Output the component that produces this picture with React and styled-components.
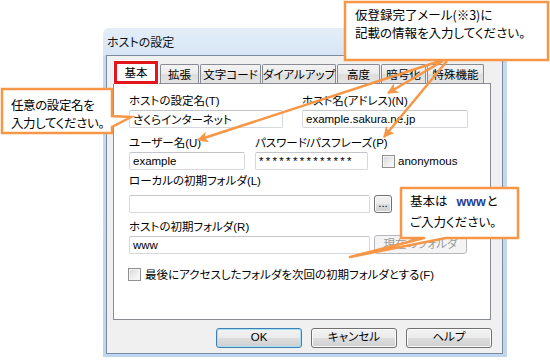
import React from "react";
import styled, { createGlobalStyle } from "styled-components";

const ORANGE = "#f79646";
const UI_FONT = `"Liberation Sans", "Noto Sans CJK JP", sans-serif`;
const CALLOUT_FONT = `"Noto Sans CJK JP", "Liberation Sans", sans-serif`;

const GlobalStyle = createGlobalStyle`
  html, body { margin: 0; padding: 0; background: #ffffff; }
  body {
    font-family: ${UI_FONT};
    font-feature-settings: "palt";
  }
  #root { width: 550px; height: 361px; }
`;

const Page = styled.div`
  position: relative;
  width: 550px;
  height: 361px;
  overflow: hidden;
  box-sizing: border-box;
  padding: 28px 0 0 103px;
`;

const Window = styled.div`
  width: 404px;
  height: 329px;
  box-sizing: border-box;
  display: flex;
  flex-direction: column;
  padding: 0 4px 3px 3px;
  border-radius: 6px 6px 0 0;
  background: linear-gradient(180deg, #e4eef8 0px, #d6e5f5 27px, #c4daf1 28px, #bed6ef 100%);
`;

const TitleBar = styled.div`
  height: 27px;
  display: flex;
  align-items: center;
  padding: 0 0 1px 1px;
  box-sizing: border-box;
  font-size: 12px;
  color: #111;
`;

const Client = styled.div`
  flex: 1;
  display: flex;
  flex-direction: column;
  border: 1px solid #7b8a9c;
  background: #f0f0f0;
  padding: 4px 10px 0 6px;
`;

const TabStrip = styled.div`
  display: flex;
  align-items: flex-end;
  height: 23px;
`;

const Tab = styled.div`
  position: relative;
  width: ${(p) => p.$w}px;
  height: ${(p) => (p.$selected ? 24 : 19)}px;
  margin-left: ${(p) => (p.$first ? 0 : 1)}px;
  margin-bottom: ${(p) => (p.$selected ? -1 : 0)}px;
  z-index: ${(p) => (p.$selected ? 1 : 0)};
  box-sizing: border-box;
  display: flex;
  align-items: center;
  justify-content: center;
  padding-bottom: ${(p) => (p.$selected ? 2 : 0)}px;
  font-size: 11.5px;
  color: #000;
  white-space: nowrap;
  border: 1px solid ${(p) => (p.$selected ? "transparent" : "#898c95")};
  border-bottom: none;
  border-radius: 2px 2px 0 0;
  background: ${(p) =>
    p.$selected
      ? "#ffffff"
      : "linear-gradient(180deg, #f3f3f3 0%, #ebebeb 50%, #dddddd 51%, #e4e4e4 100%)"};

  &::after {
    content: "";
    display: ${(p) => (p.$highlight ? "block" : "none")};
    position: absolute;
    left: 0;
    top: 0;
    width: 100%;
    height: 23px;
    box-sizing: border-box;
    border: 3px solid #e3161e;
  }
`;

const Panel = styled.div`
  width: 378px;
  height: 237px;
  box-sizing: border-box;
  border: 1px solid #898c95;
  background: #ffffff;
  padding: 9px 0 0 15px;
  display: flex;
  flex-direction: column;
`;

const Row = styled.div`
  display: flex;
  align-items: flex-end;
  margin-top: ${(p) => p.$mt || 0}px;
`;

const Field = styled.div`
  display: flex;
  flex-direction: column;
  width: ${(p) => p.$w}px;
  margin-left: ${(p) => p.$ml || 0}px;
`;

const Label = styled.label`
  height: 16px;
  line-height: 16px;
  font-size: 11.5px;
  color: #000;
  white-space: nowrap;
  margin-bottom: ${(p) => (p.$mb === undefined ? 1 : p.$mb)}px;
`;

const TextBox = styled.input`
  display: block;
  width: 100%;
  height: 18px;
  margin: 0;
  box-sizing: border-box;
  border: 1px solid #d5d9de;
  border-top-color: #c2c6cc;
  border-radius: 2px;
  padding: 0 3px;
  background: #ffffff;
  font-family: ${UI_FONT};
  font-feature-settings: "palt";
  font-size: 11.5px;
  letter-spacing: ${(p) => (p.$spaced ? "2.3px" : "0")};
  color: #000;
  outline: none;
`;

const PushButton = styled.button`
  width: ${(p) => p.$w}px;
  height: ${(p) => p.$h || 20}px;
  margin: 0 0 0 ${(p) => p.$ml || 0}px;
  padding: 0;
  box-sizing: border-box;
  font-family: ${UI_FONT};
  font-feature-settings: "palt";
  font-size: 11.5px;
  line-height: 1;
  color: ${(p) => (p.disabled ? "#9a9a9a" : "#000")};
  border-radius: 3px;
  border: 1px solid ${(p) => (p.$default ? "#3c7fb1" : p.disabled ? "#b5b9bd" : "#707070")};
  background: ${(p) =>
    p.disabled
      ? "#f4f4f4"
      : "linear-gradient(180deg, #f2f2f2 0%, #ebebeb 48%, #dddddd 52%, #cfcfcf 100%)"};
  box-shadow: inset 0 0 0 1px ${(p) => (p.$default ? "#a6e0f7" : p.disabled ? "#f4f4f4" : "#fbfbfb")};
`;

const CheckRow = styled.div`
  display: flex;
  align-items: center;
  gap: ${(p) => p.$gap || 3}px;
  height: ${(p) => p.$h || 16}px;
  margin-left: ${(p) => p.$ml || 0}px;
  margin-top: ${(p) => p.$mt || 0}px;
  font-size: 11.5px;
  color: #000;
  white-space: nowrap;
`;

const CheckBox = styled.span`
  display: block;
  flex: none;
  width: 13px;
  height: 13px;
  box-sizing: border-box;
  border: 1px solid #8e8f8f;
  background: linear-gradient(135deg, #d6d6d6 0%, #f0f0f0 60%, #fbfbfb 100%);
  box-shadow: inset 0 0 0 1px #f4f4f4;
`;

const ButtonRow = styled.div`
  display: flex;
  justify-content: flex-end;
  gap: 9px;
  margin-top: 8px;
`;

const Overlay = styled.svg`
  position: absolute;
  left: 0;
  top: 0;
  pointer-events: none;
`;

const CalloutText = styled.div`
  position: absolute;
  left: ${(p) => p.$x}px;
  top: ${(p) => p.$y}px;
  font-family: ${CALLOUT_FONT};
  font-feature-settings: "palt";
  font-size: 12.5px;
  letter-spacing: ${(p) => p.$ls || 0}px;
  line-height: ${(p) => p.$lh || 18}px;
  color: #000;
  white-space: nowrap;
`;

const Accent = styled.b`
  color: #1f3c99;
  font-family: "Liberation Sans", sans-serif;
  font-weight: bold;
  margin: 0 1px 0 9px;
`;

const tabs = [
  { label: "基本", w: 46, sel: true },
  { label: "拡張", w: 39 },
  { label: "文字コード", w: 61 },
  { label: "ダイアルアップ", w: 74 },
  { label: "高度", w: 43 },
  { label: "暗号化", w: 45 },
  { label: "特殊機能", w: 57 },
];

export default function App() {
  return (
    <>
      <GlobalStyle />
      <Page>
        <Window>
          <TitleBar>ホストの設定</TitleBar>
          <Client>
            <TabStrip>
              {tabs.map((t, i) => (
                <Tab key={t.label} $w={t.w} $first={i === 0} $selected={t.sel} $highlight={t.sel}>
                  {t.label}
                </Tab>
              ))}
            </TabStrip>
            <Panel>
              <Row>
                <Field $w={154}>
                  <Label>ホストの設定名(T)</Label>
                  <TextBox readOnly value="さくらインターネット" />
                </Field>
                <Field $w={166} $ml={19}>
                  <Label>ホスト名(アドレス)(N)</Label>
                  <TextBox readOnly value="example.sakura.ne.jp" />
                </Field>
              </Row>
              <Row $mt={7}>
                <Field $w={116}>
                  <Label>ユーザー名(U)</Label>
                  <TextBox readOnly value="example" />
                </Field>
                <Field $w={113} $ml={10}>
                  <Label>パスワード/パスフレーズ(P)</Label>
                  <TextBox readOnly $spaced value="**************" />
                </Field>
                <CheckRow $h={18} $ml={14} $gap={3}>
                  <CheckBox />
                  anonymous
                </CheckRow>
              </Row>
              <Row $mt={3}>
                <Field $w={241}>
                  <Label $mb={6}>ローカルの初期フォルダ(L)</Label>
                  <TextBox readOnly value="" />
                </Field>
                <PushButton $w={18} $h={18} $ml={4}>...</PushButton>
              </Row>
              <Row $mt={6}>
                <Field $w={241}>
                  <Label>ホストの初期フォルダ(R)</Label>
                  <TextBox readOnly value="www" />
                </Field>
                <PushButton $w={93} $h={19} $ml={4} disabled>
                  現在のフォルダ
                </PushButton>
              </Row>
              <CheckRow $mt={12} $ml={-1} $gap={4}>
                <CheckBox />
                最後にアクセスしたフォルダを次回の初期フォルダとする(F)
              </CheckRow>
            </Panel>
            <ButtonRow>
              <PushButton $w={86} $default>OK</PushButton>
              <PushButton $w={86}>キャンセル</PushButton>
              <PushButton $w={86}>ヘルプ</PushButton>
            </ButtonRow>
          </Client>
        </Window>

        <Overlay width="550" height="361" viewBox="0 0 550 361">
          <defs>
            <marker
              id="arrowhead"
              viewBox="0 0 10 10"
              refX="9"
              refY="5"
              markerWidth="4.4"
              markerHeight="4.4"
              orient="auto"
            >
              <path d="M0,0 L10,5 L0,10 L2.5,5 Z" fill={ORANGE} />
            </marker>
          </defs>
          <path
            d="M2,89 H112 V116 L131,117 L112,127 V133 H2 Z"
            fill="#ffffff"
            stroke={ORANGE}
            strokeWidth="2.5"
          />
          <rect x="345" y="2" width="203" height="58" fill="#ffffff" stroke={ORANGE} strokeWidth="2.5" />
          <line x1="440" y1="61" x2="198" y2="140" stroke={ORANGE} strokeWidth="2.5" markerEnd="url(#arrowhead)" />
          <line x1="443" y1="61" x2="388" y2="93" stroke={ORANGE} strokeWidth="2.5" markerEnd="url(#arrowhead)" />
          <line x1="447" y1="61" x2="384" y2="137" stroke={ORANGE} strokeWidth="2.5" markerEnd="url(#arrowhead)" />
          <path
            d="M401,188 H518 V238 H446 L350,257 L424,238 H401 Z"
            fill="#ffffff"
            stroke={ORANGE}
            strokeWidth="2.5"
            strokeLinejoin="round"
          />
        </Overlay>

        <CalloutText $x={11} $y={96} $lh={18} $ls={-0.4}>
          任意の設定名を
          <br />
          入力してください。
        </CalloutText>
        <CalloutText $x={355} $y={6}>
          仮登録完了メール(※3)に
          <br />
          記載の情報を入力してください。
        </CalloutText>
        <CalloutText $x={410} $y={191} $lh={20}>
          基本は<Accent>www</Accent>と
          <br />
          ご入力ください。
        </CalloutText>
      </Page>
    </>
  );
}
